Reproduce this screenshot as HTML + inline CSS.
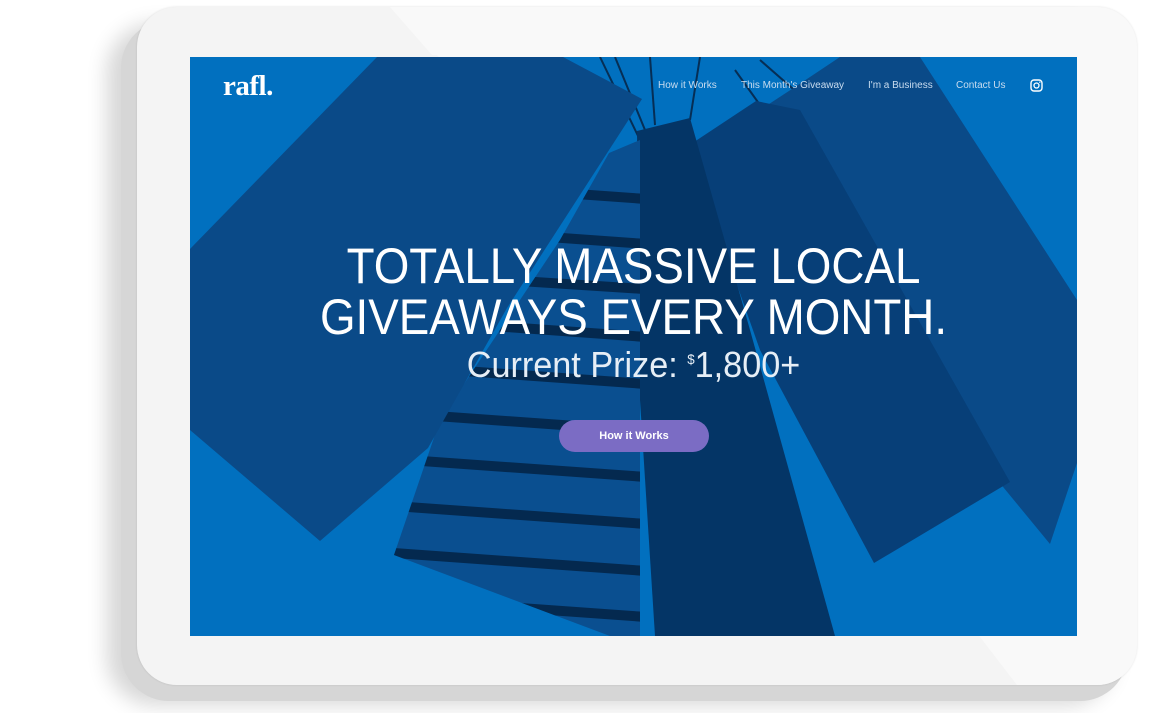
<!DOCTYPE html>
<html><head><meta charset="utf-8"><style>
html,body{margin:0;padding:0;width:1156px;height:713px;background:#fff;overflow:hidden;position:relative;font-family:"Liberation Sans",sans-serif}
.base{position:absolute;left:121px;top:20px;width:1007px;height:681px;border-radius:48px;background:#d6d6d6;box-shadow:-14px 4px 20px rgba(0,0,0,.16)}
.face{position:absolute;left:137px;top:7px;width:1000px;height:678px;border-radius:40px;background:#f4f4f4;overflow:hidden;box-shadow:0 0 2px rgba(0,0,0,.12)}
.screen{position:absolute;left:190px;top:57px;width:887px;height:579px;background:#0170bf;overflow:hidden}
.nav{position:absolute;top:23px;font-size:10px;color:#c9dcef;white-space:nowrap}
.logo{position:absolute;left:33px;top:13px;font-family:"Liberation Serif",serif;font-weight:bold;font-size:29px;color:#fff;letter-spacing:-0.5px}
.t{position:absolute;left:0;width:887px;text-align:center;color:#fff;white-space:nowrap;font-weight:normal}
.btn{position:absolute;left:369px;top:363px;width:150px;height:32px;border-radius:16px;background:#7b6cc4;color:#fff;font-size:11px;font-weight:bold;text-align:center;line-height:32px}
</style></head><body>
<div class="base"></div>
<div class="face">
 <svg width="1000" height="678" style="position:absolute;left:0;top:0"><polygon points="253,0 1000,0 1000,678 880,678 820,600 300,48 295,48" fill="#f9f9f9"/></svg>
</div>
<div class="screen">
<svg width="887" height="579" viewBox="190 57 887 579" style="position:absolute;left:0;top:0">
 <g stroke="#062e55" stroke-width="2" fill="none">
  <path d="M600,57 L640,140"/><path d="M615,57 L645,130"/><path d="M650,57 L655,125"/><path d="M700,57 L690,120"/><path d="M735,70 L760,105"/><path d="M760,60 L800,95"/>
 </g>
 <polygon points="795,87 840,57 920,57 1077,300 1077,463 1050,544 999,482 760,110" fill="#0a4a88"/>
 <polygon points="688,146 756,101 800,110 1010,482 874,563 760,350" fill="#073f78"/>
 <polygon points="637,131 690,118 750,330 835,636 655,636 640,400" fill="#043566"/>
 <polygon points="609,153 640,140 640,636 610,636 394,555 440,420 560,240" fill="#0a4f90"/>
 <clipPath id="sc"><polygon points="609,153 640,140 640,636 610,636 394,555 440,420 560,240"/></clipPath>
 <g clip-path="url(#sc)" stroke="#04294f" stroke-width="10">
  <path d="M380,180 L660,200"/><path d="M380,225 L660,245"/><path d="M380,272 L660,290"/><path d="M380,318 L660,338"/><path d="M380,365 L660,385"/><path d="M380,412 L660,432"/><path d="M380,458 L660,478"/><path d="M380,505 L660,525"/><path d="M380,552 L660,572"/><path d="M380,598 L660,618"/>
 </g>
 <polygon points="190,249 377,57 563,57 642,99 507,308 428,448 320,541 190,430" fill="#0a4a88"/>
</svg>
<div class="logo">rafl.</div>
<div class="nav" style="left:468px">How it Works</div>
<div class="nav" style="left:551px">This Month's Giveaway</div>
<div class="nav" style="left:678px">I'm a Business</div>
<div class="nav" style="left:766px">Contact Us</div>
<svg style="position:absolute;left:840px;top:22px" width="13" height="13" viewBox="0 0 13 13"><rect x="1" y="1" width="11" height="11" rx="3" fill="none" stroke="#fff" stroke-width="1.4"/><circle cx="6.5" cy="6.5" r="2.5" fill="none" stroke="#fff" stroke-width="1.3"/><circle cx="9.8" cy="3.2" r=".7" fill="#fff"/></svg>
<div class="t" style="top:180px;font-size:50px;transform:scaleX(0.915)">TOTALLY MASSIVE LOCAL</div>
<div class="t" style="top:231px;font-size:50px;transform:scaleX(0.915)">GIVEAWAYS EVERY MONTH.</div>
<div class="t" style="top:287px;font-size:36px;color:#e6eef6;transform:scaleX(0.95)">Current Prize: <sup style="font-size:14px">$</sup>1,800+</div>
<div class="btn">How it Works</div>
</div>
</body></html>
